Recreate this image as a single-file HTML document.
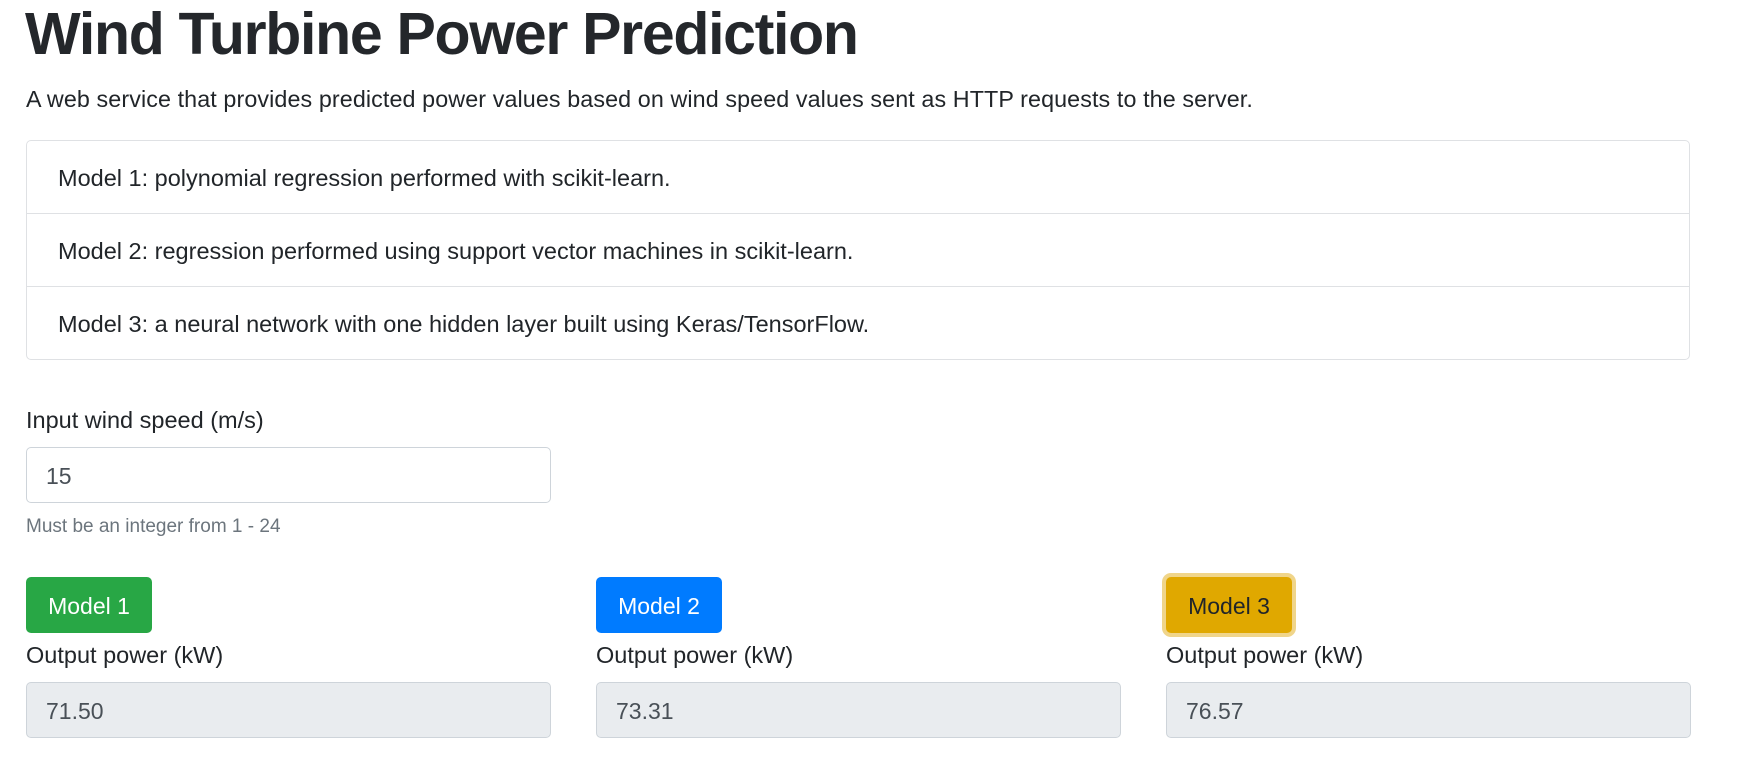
<!DOCTYPE html>
<html><head><meta charset="utf-8"><style>
*{box-sizing:border-box;margin:0;padding:0}
body{width:1739px;height:784px;background:#fff;font-family:"Liberation Sans",sans-serif;color:#212529;position:relative;overflow:hidden}
.a{position:absolute}
h1{position:absolute;left:25px;top:0px;font-size:59px;font-weight:bold;letter-spacing:-1.3px;white-space:nowrap;color:#24272b}
.sub{left:26px;top:86px;font-size:23.3px;letter-spacing:0.1px}
.lg{left:26px;top:140px;width:1664px;height:220px;border:1px solid #dfe1e4;border-radius:5px}
.lg div{height:73px;border-bottom:1px solid #dfe1e4;padding-left:31px;line-height:75px;font-size:23.5px}
.lg div:last-child{border-bottom:none}
.lbl{font-size:23.5px}
.inp{border:1px solid #ced4da;border-radius:5px;height:56px;width:525px;padding-left:19px;line-height:56px;font-size:23px;color:#495057}
.ro{background:#e9ecef}
.btn{height:56px;border-radius:5px;color:#fff;font-size:23px;line-height:58px;text-align:center;width:126px}
</style></head><body>
<h1>Wind Turbine Power Prediction</h1>
<div class="a sub">A web service that provides predicted power values based on wind speed values sent as HTTP requests to the server.</div>
<div class="a lg">
<div>Model 1: polynomial regression performed with scikit-learn.</div>
<div>Model 2: regression performed using support vector machines in scikit-learn.</div>
<div>Model 3: a neural network with one hidden layer built using Keras/TensorFlow.</div>
</div>
<div class="a lbl" style="left:26px;top:407px">Input wind speed (m/s)</div>
<div class="a inp" style="left:26px;top:447px">15</div>
<div class="a" style="left:26px;top:516px;font-size:19px;color:#6c757d">Must be an integer from 1 - 24</div>

<div class="a btn" style="left:26px;top:577px;background:#28a745">Model 1</div>
<div class="a btn" style="left:596px;top:577px;background:#007bff">Model 2</div>
<div class="a btn" style="left:1166px;top:577px;background:#e0a800;color:#212529;box-shadow:0 0 0 4px #f0d58a">Model 3</div>

<div class="a lbl" style="left:26px;top:642px">Output power (kW)</div>
<div class="a lbl" style="left:596px;top:642px">Output power (kW)</div>
<div class="a lbl" style="left:1166px;top:642px">Output power (kW)</div>
<div class="a inp ro" style="left:26px;top:682px">71.50</div>
<div class="a inp ro" style="left:596px;top:682px">73.31</div>
<div class="a inp ro" style="left:1166px;top:682px">76.57</div>
</body></html>
